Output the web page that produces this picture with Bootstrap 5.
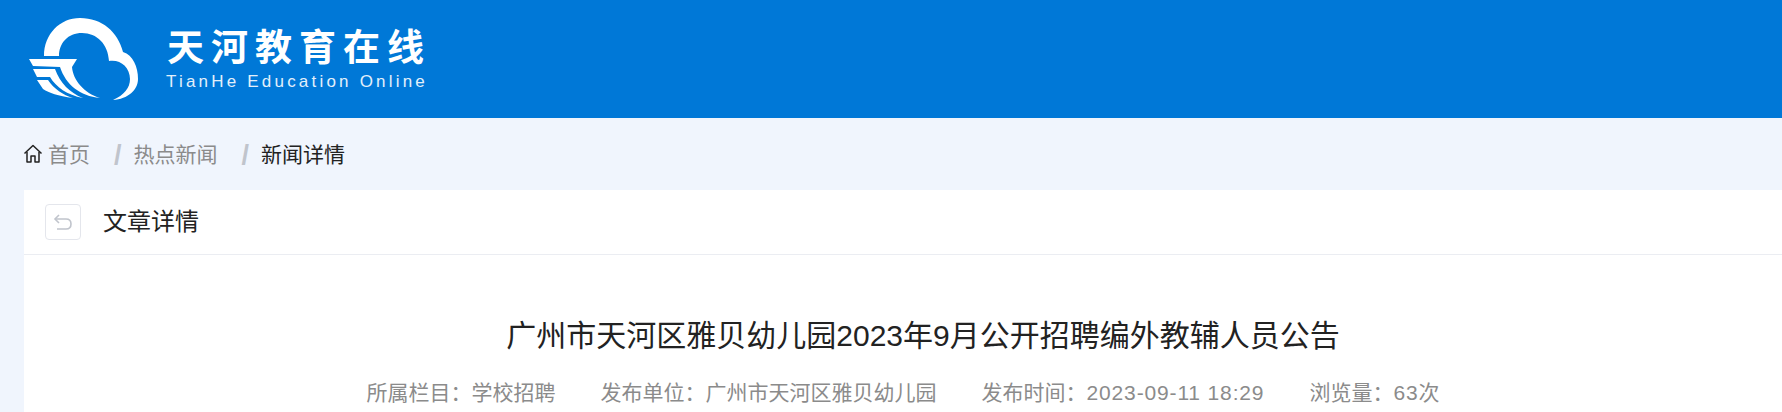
<!DOCTYPE html>
<html lang="zh-CN">
<head>
<meta charset="utf-8">
<title>文章详情</title>
<link href="https://cdn.jsdelivr.net/npm/bootstrap@5.3.0/dist/css/bootstrap.min.css" rel="stylesheet">
<style>
html, body { height: 100%; overflow: hidden; }
body { background: #f0f5fd; font-family: "Liberation Sans", "Noto Sans CJK SC", sans-serif; color: #222; }
.top-band { height: 118px; background: #0078d7; padding-left: 28px; gap: 26px; }
.brand-cn { font-family: "Noto Sans CJK SC", sans-serif; font-size: 37px; line-height: 44px; letter-spacing: 7px; color: #fff; font-weight: 700; margin-top: -3px; padding-left: 1px; }
.brand-en { font-size: 17px; line-height: 20px; letter-spacing: 3.2px; color: #e3f0fb; margin-top: 5px; }
.crumbs { height: 72px; padding-left: 23px; padding-top: 2px; font-size: 21px; color: #8b8b8b; }
.crumb-sep { color: #c0c4cc; margin: 0 12px 0 24px; font-size: 27px; line-height: 1; font-weight: 700; font-style: normal; }
.crumb-now { color: #222; }
.crumb-home { margin-right: 5px; margin-top: -2px; }
.sheet { margin-left: 24px; background: #fff; min-height: 240px; }
.sheet-head { height: 65px; border-bottom: 1px solid #ebedf2; padding-left: 21px; gap: 22px; font-size: 24px; color: #222; }
.back-box { width: 36px; height: 36px; border: 1px solid #e4e6ec; border-radius: 4px; }
.art-title { font-size: 30px; font-weight: 400; color: #222; line-height: 40px; margin: 61px 0 0; padding-left: 40px; }
.art-meta { font-size: 21px; line-height: 30px; color: #8b8b8b; gap: 45px; margin-top: 22px; }
.art-num { letter-spacing: .85px; }
</style>
</head>
<body>
<header class="top-band d-flex align-items-center">
  <svg width="112" height="84" viewBox="-2 0 112 84" aria-hidden="true">
    <path fill="#fff" d="M14 39C14 17 30 1 50 1C72 1 88 15 93 35C103 38 108 50 108 62C108 73 98 82 83 83C94 78 100 71 100 62C100 50 90 42 79 44C78 27 67 16 52 16C38 16 29 26 29 39Z"/>
    <path fill="#fff" d="M-1 42L47 42L42 50C43 63 54 76 70 81C50 79 36 68 30 50L3 49Z"/>
    <path fill="#fff" d="M3 52L25 52C30 66 40 76 53 81C37 78 26 70 20 60L7 60Z"/>
    <path fill="#fff" d="M7 63L18 63C24 72 33 78 43 81C28 79 19 76 13 72Z"/>
  </svg>
  <div>
    <div class="brand-cn">天河教育在线</div>
    <div class="brand-en">TianHe Education Online</div>
  </div>
</header>
<nav class="crumbs d-flex align-items-center" aria-label="面包屑">
  <svg class="crumb-home" width="20" height="20" viewBox="0 0 20 20" fill="none" stroke="#222" stroke-width="1.5" stroke-linejoin="round" aria-hidden="true">
    <path d="M1.5 9.5L10 1.5L18.5 9.5"/>
    <path d="M4 8V18H8V12H12V18H16V8"/>
  </svg>
  <span>首页</span><i class="crumb-sep">/</i><span>热点新闻</span><i class="crumb-sep">/</i><span class="crumb-now">新闻详情</span>
</nav>
<main class="sheet">
  <div class="sheet-head d-flex align-items-center">
    <span class="back-box d-flex align-items-center justify-content-center">
      <svg width="20" height="18" viewBox="0 0 20 18" fill="none" stroke="#c0c4cc" stroke-width="1.6" aria-hidden="true">
        <path d="M6 2L2 6L6 10"/>
        <path d="M2 6H13C16 6 18 8 18 11C18 14 16 16 13 16H4"/>
      </svg>
    </span>
    <span>文章详情</span>
  </div>
  <h1 class="art-title text-center">广州市天河区雅贝幼儿园2023年9月公开招聘编外教辅人员公告</h1>
  <div class="art-meta d-flex justify-content-center">
    <span>所属栏目&#xFF1A;学校招聘</span>
    <span>发布单位&#xFF1A;广州市天河区雅贝幼儿园</span>
    <span>发布时间&#xFF1A;<span class="art-num">2023-09-11 18:29</span></span>
    <span>浏览量&#xFF1A;<span class="art-num">63</span>次</span>
  </div>
</main>
<script src="https://cdn.jsdelivr.net/npm/bootstrap@5.3.0/dist/js/bootstrap.bundle.min.js"></script>
</body>
</html>
